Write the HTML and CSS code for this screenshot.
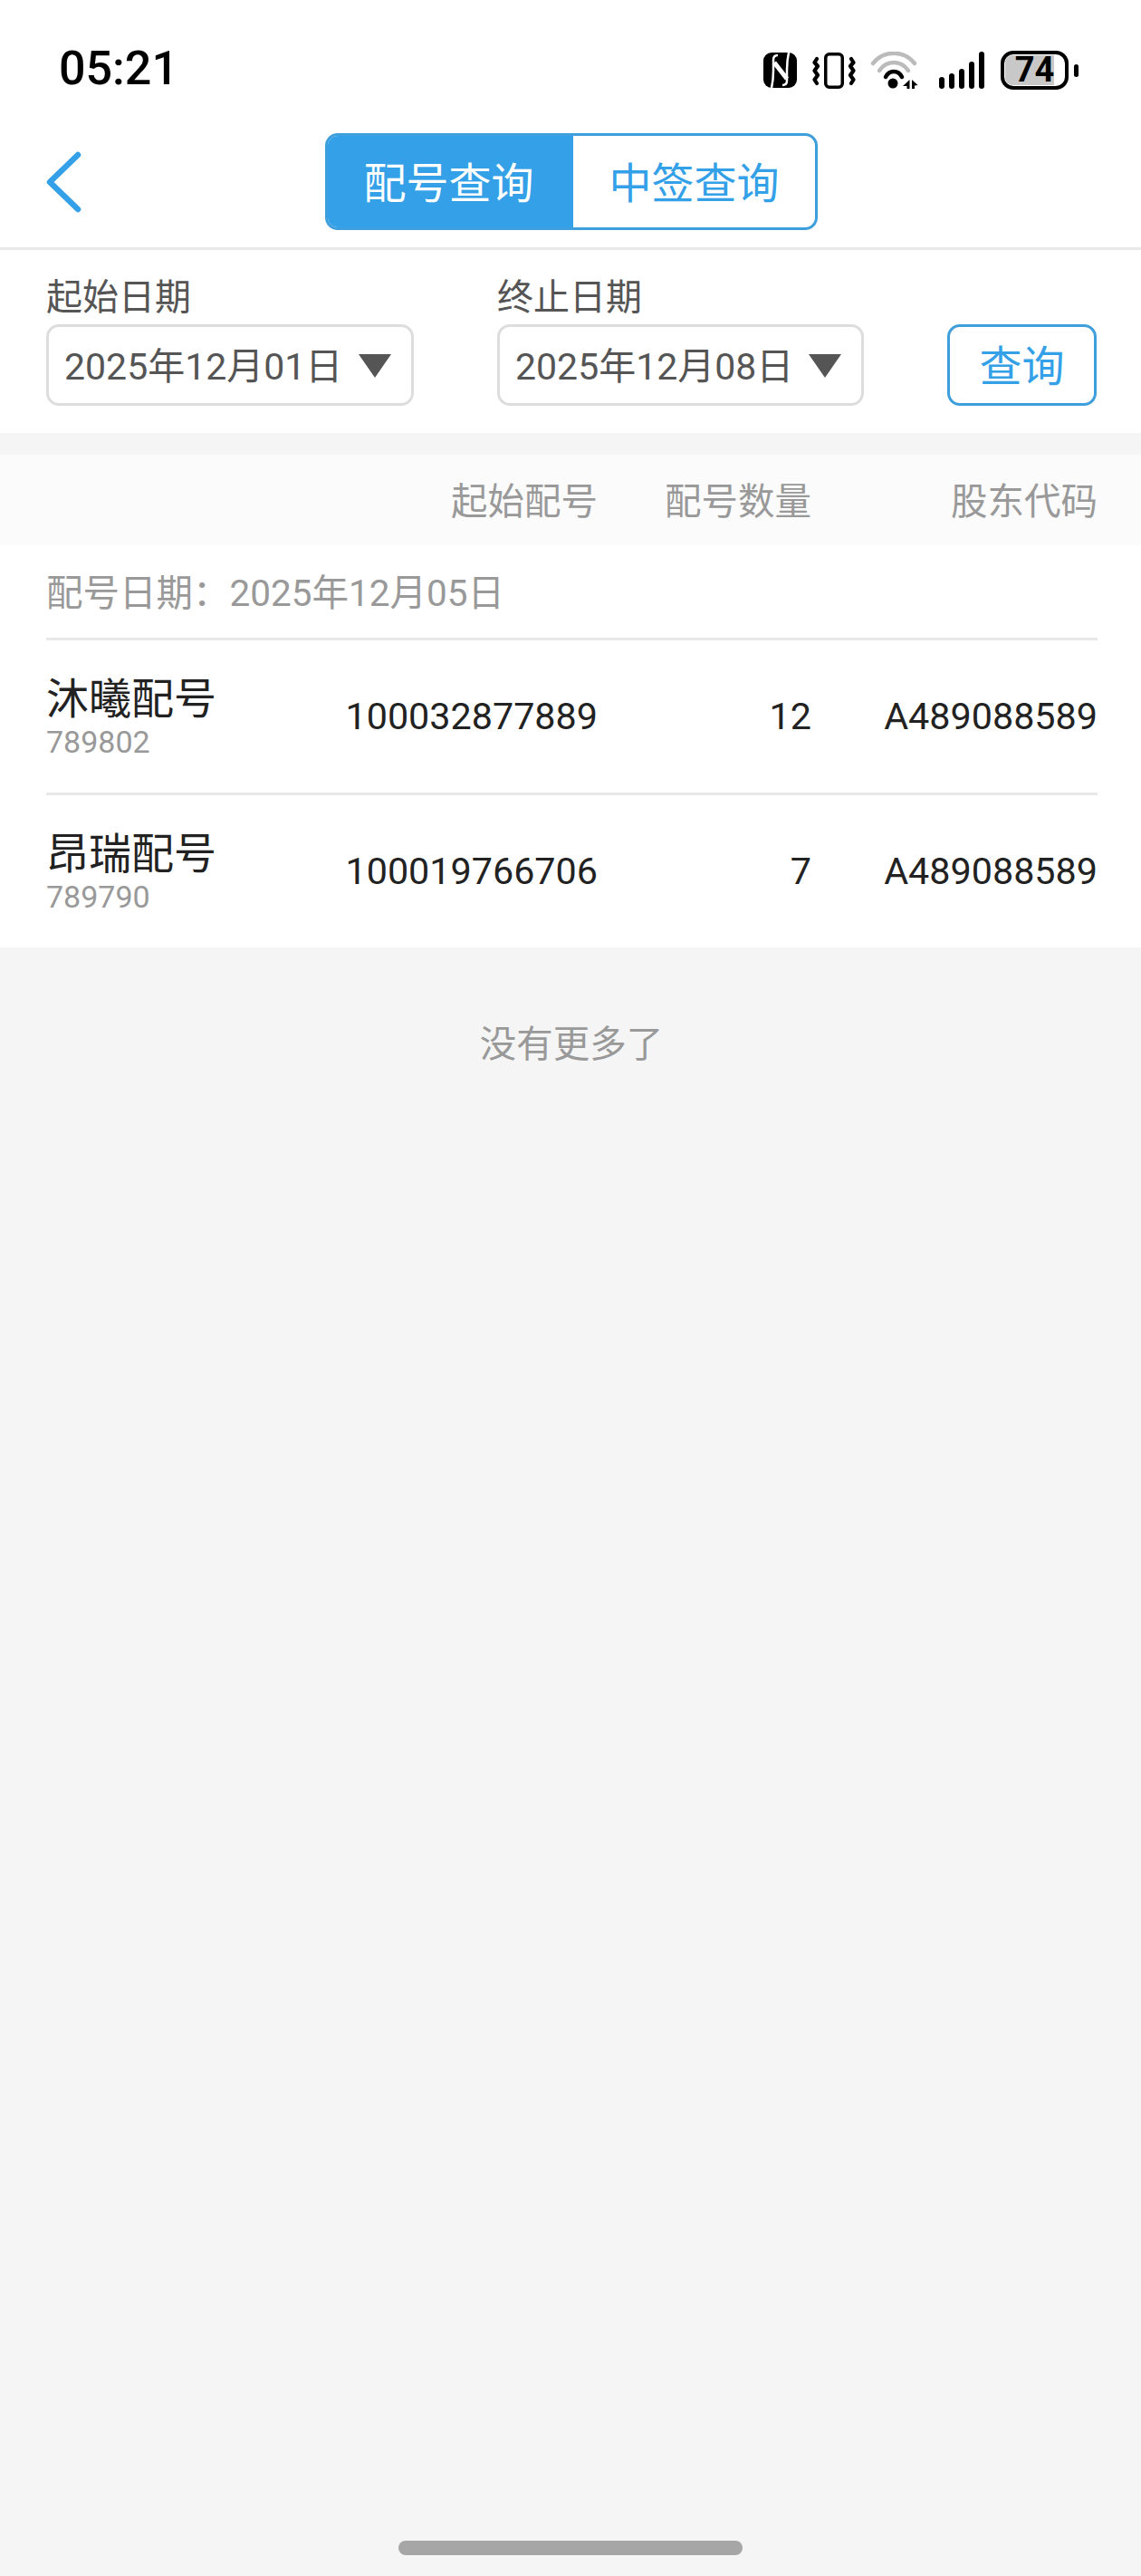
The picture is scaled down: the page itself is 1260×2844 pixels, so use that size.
FILE: index.html
```html
<!DOCTYPE html>
<html lang="zh-CN">
<head>
    <meta charset="UTF-8">
    <meta name="viewport" content="width=device-width, initial-scale=1.0">
    <title>配号查询</title>
    <link rel="stylesheet" href="styles.css">
</head>
<body>
    <div class="page">
        <div class="status-bar">
            <span class="time">05:21</span>
            <div class="status-icons">
                <svg class="icon-nfc" width="37" height="39" viewBox="0 0 37 39" fill="none">
                    <rect x="0" y="0" width="37" height="39" rx="9" fill="#000"/>
                    <path d="M9 39 Q11 30 11 20 V8 Q11 3 16 3" stroke="#fff" stroke-width="2.5"/>
                    <path d="M28 0 Q26 9 26 19 V31 Q26 36 21 36" stroke="#fff" stroke-width="2.5"/>
                    <path d="M12 11 L26 29" stroke="#fff" stroke-width="5"/>
                </svg>
                <svg class="icon-vibrate" width="48" height="40" viewBox="0 0 48 40" fill="none" stroke="#000" stroke-linejoin="round" stroke-linecap="round">
                    <rect x="14.75" y="1.75" width="18.5" height="36.5" rx="4" stroke-width="3.5"/>
                    <path d="M5 7 L2.5 11 L6 15 L2.5 20 L6 25 L2.5 30 L5 34" stroke-width="4.2"/>
                    <path d="M43 7 L45.5 11 L42 15 L45.5 20 L42 25 L45.5 30 L43 34" stroke-width="4.2"/>
                </svg>
                <svg class="icon-wifi" width="53" height="41" viewBox="0 0 53 41" fill="none">
                    <path d="M3 13 C15 -2 37 -2 49 13" stroke="#bbb" stroke-width="4.5" stroke-linecap="round"/>
                    <path d="M10 21 C18 9 34 9 42 21" stroke="#bbb" stroke-width="4.5" stroke-linecap="round"/>
                    <path d="M17 28 C21 20 31 20 35 28" stroke="#000" stroke-width="4.5" stroke-linecap="round"/>
                    <circle cx="25" cy="35" r="5.5" fill="#000"/>
                    <path d="M43.5 31 V41 H40.5 V38 H36 Z M46 31 L52.5 37 L49 37.5 V41 H46 Z" fill="#000"/>
                </svg>
                <svg class="icon-signal" width="50" height="41" viewBox="0 0 50 41" fill="#000">
                    <rect x="0" y="28" width="6" height="13" rx="3"/>
                    <rect x="11" y="24" width="6" height="17" rx="3"/>
                    <rect x="22" y="19" width="6" height="22" rx="3"/>
                    <rect x="33" y="11" width="6" height="30" rx="3"/>
                    <rect x="44" y="0" width="6" height="41" rx="3"/>
                </svg>
                <div class="battery">
                    <div class="battery-body">
                        <div class="battery-fill"></div>
                        <span class="battery-num">74</span>
                    </div>
                    <div class="battery-cap"></div>
                </div>
            </div>
        </div>

        <div class="nav-bar">
            <a class="back-btn">
                <svg width="42" height="68" viewBox="0 0 42 68" fill="none">
                    <path d="M37 4 L6 34 L37 64" stroke="#33a0e8" stroke-width="6.5" stroke-linecap="round" stroke-linejoin="round"/>
                </svg>
            </a>
            <div class="tabs">
                <div class="tab active">配号查询</div>
                <div class="tab">中签查询</div>
            </div>
        </div>

        <div class="filter">
            <div class="field">
                <label>起始日期</label>
                <div class="select">
                    <span>2025年12月01日</span>
                    <i class="arrow"></i>
                </div>
            </div>
            <div class="field">
                <label>终止日期</label>
                <div class="select">
                    <span>2025年12月08日</span>
                    <i class="arrow"></i>
                </div>
            </div>
            <button class="search-btn">查询</button>
        </div>

        <div class="table-head">
            <span></span>
            <span>起始配号</span>
            <span>配号数量</span>
            <span>股东代码</span>
        </div>

        <div class="list">
            <div class="group-title">配号日期：2025年12月05日</div>
            <div class="row">
                <div class="name">
                    <p class="stock">沐曦配号</p>
                    <p class="code">789802</p>
                </div>
                <span>100032877889</span>
                <span>12</span>
                <span>A489088589</span>
            </div>
            <div class="row">
                <div class="name">
                    <p class="stock">昂瑞配号</p>
                    <p class="code">789790</p>
                </div>
                <span>100019766706</span>
                <span>7</span>
                <span>A489088589</span>
            </div>
        </div>

        <p class="no-more">没有更多了</p>
        <div class="home-bar"></div>
    </div>
</body>
</html>
```

FILE: styles.css
```css
*{
    margin: 0;
    padding: 0;
    box-sizing: border-box;
}
body{
    background-color: #f5f5f5;
    font-family: Roboto, "Noto Sans CJK SC", sans-serif;
}
.page{
    height: 2844px;
    display: flex;
    flex-direction: column;
}
.status-bar{
    height: 147px;
    background-color: #fff;
    display: flex;
    justify-content: space-between;
    align-items: flex-start;
    padding: 46px 69px 0 65px;
}
.time{
    font-size: 52px;
    font-weight: 500;
    line-height: 60px;
    color: #000;
}
.status-icons{
    display: flex;
    align-items: center;
    height: 43px;
    margin-top: 10px;
}
.icon-vibrate{
    margin-left: 17px;
}
.icon-wifi{
    margin-left: 16px;
}
.icon-signal{
    margin-left: 23px;
}
.battery{
    margin-left: 18px;
    display: flex;
    align-items: center;
    gap: 6px;
}
.battery-body{
    position: relative;
    width: 75px;
    height: 43px;
    border: 4px solid #000;
    border-radius: 14px;
    overflow: hidden;
    display: flex;
    justify-content: center;
    align-items: center;
}
.battery-fill{
    position: absolute;
    left: 1px;
    top: 1px;
    bottom: 1px;
    width: 54px;
    background-color: #c8c8c8;
    border-radius: 8px 0 0 8px;
}
.battery-num{
    position: relative;
    font-size: 38px;
    font-weight: 700;
    line-height: 35px;
    color: #000;
}
.battery-cap{
    width: 5px;
    height: 14px;
    background-color: #000;
    border-radius: 3px;
}
.nav-bar{
    height: 129px;
    background-color: #fff;
    border-bottom: 3px solid #e8e8e8;
    display: grid;
    grid-template-columns: 1fr auto 1fr;
    padding-bottom: 19px;
    padding-left: 49px;
    align-items: center;
}
.back-btn{
    display: flex;
}
.tabs{
    display: flex;
    width: 544px;
    height: 107px;
    margin-left: -47px;
    border: 3px solid #3f9fdc;
    border-radius: 14px;
    overflow: hidden;
}
.tab{
    flex: 1;
    display: flex;
    justify-content: center;
    align-items: center;
    padding-bottom: 4px;
    font-size: 47px;
    color: #33a0e8;
}
.tab.active{
    flex: 0 0 271px;
    padding-right: 4px;
    background-color: #33a0e8;
    color: #fff;
}
.filter{
    height: 202px;
    background-color: #fff;
    display: flex;
    align-items: flex-start;
    padding: 27px 49px 0 51px;
}
.field{
    width: 406px;
    margin-right: 92px;
}
.field + .field{
    width: 405px;
}
.field label{
    display: block;
    font-size: 40px;
    line-height: 52px;
    margin-bottom: 3px;
    color: #555;
}
.select{
    height: 90px;
    border: 3px solid #ddd;
    border-radius: 14px;
    display: flex;
    justify-content: space-between;
    align-items: center;
    padding: 0 22px 4px 17px;
    font-size: 41px;
    color: #555;
}
.arrow{
    width: 0;
    height: 0;
    margin-top: 6px;
    border-left: 18px solid transparent;
    border-right: 18px solid transparent;
    border-top: 26px solid #555;
}
.search-btn{
    width: 165px;
    height: 90px;
    margin-top: 55px;
    padding-bottom: 6px;
    background-color: #fff;
    border: 3px solid #3f9fdc;
    border-radius: 14px;
    font-family: inherit;
    font-size: 47px;
    color: #33a0e8;
}
.table-head{
    height: 100px;
    margin-top: 24px;
    background-color: #fbfbfb;
    display: grid;
    grid-template-columns: 270px 339px 236px 316px;
    align-items: center;
    padding: 0 48px 3px 51px;
    text-align: right;
    font-size: 40.5px;
    color: #999;
}
.list{
    background-color: #fff;
    padding: 0 48px 0 51px;
}
.group-title{
    height: 102px;
    padding-bottom: 4px;
    display: flex;
    align-items: center;
    font-size: 40.5px;
    color: #999;
}
.row{
    height: 171px;
    border-top: 3px solid #e8e8e8;
    display: grid;
    grid-template-columns: 270px 339px 236px 316px;
    align-items: center;
    text-align: right;
    font-size: 41.3px;
    color: #222;
}
.name{
    text-align: left;
}
.stock{
    font-size: 47px;
    line-height: 56px;
    color: #222;
}
.code{
    font-size: 34px;
    line-height: 38px;
    color: #999;
}
.no-more{
    margin-top: 78px;
    padding-left: 2px;
    text-align: center;
    font-size: 40.5px;
    line-height: 58px;
    color: #999;
}
.home-bar{
    width: 380px;
    height: 16px;
    margin: auto auto 23px;
    background-color: #a6a6a6;
    border-radius: 8px;
}
```
